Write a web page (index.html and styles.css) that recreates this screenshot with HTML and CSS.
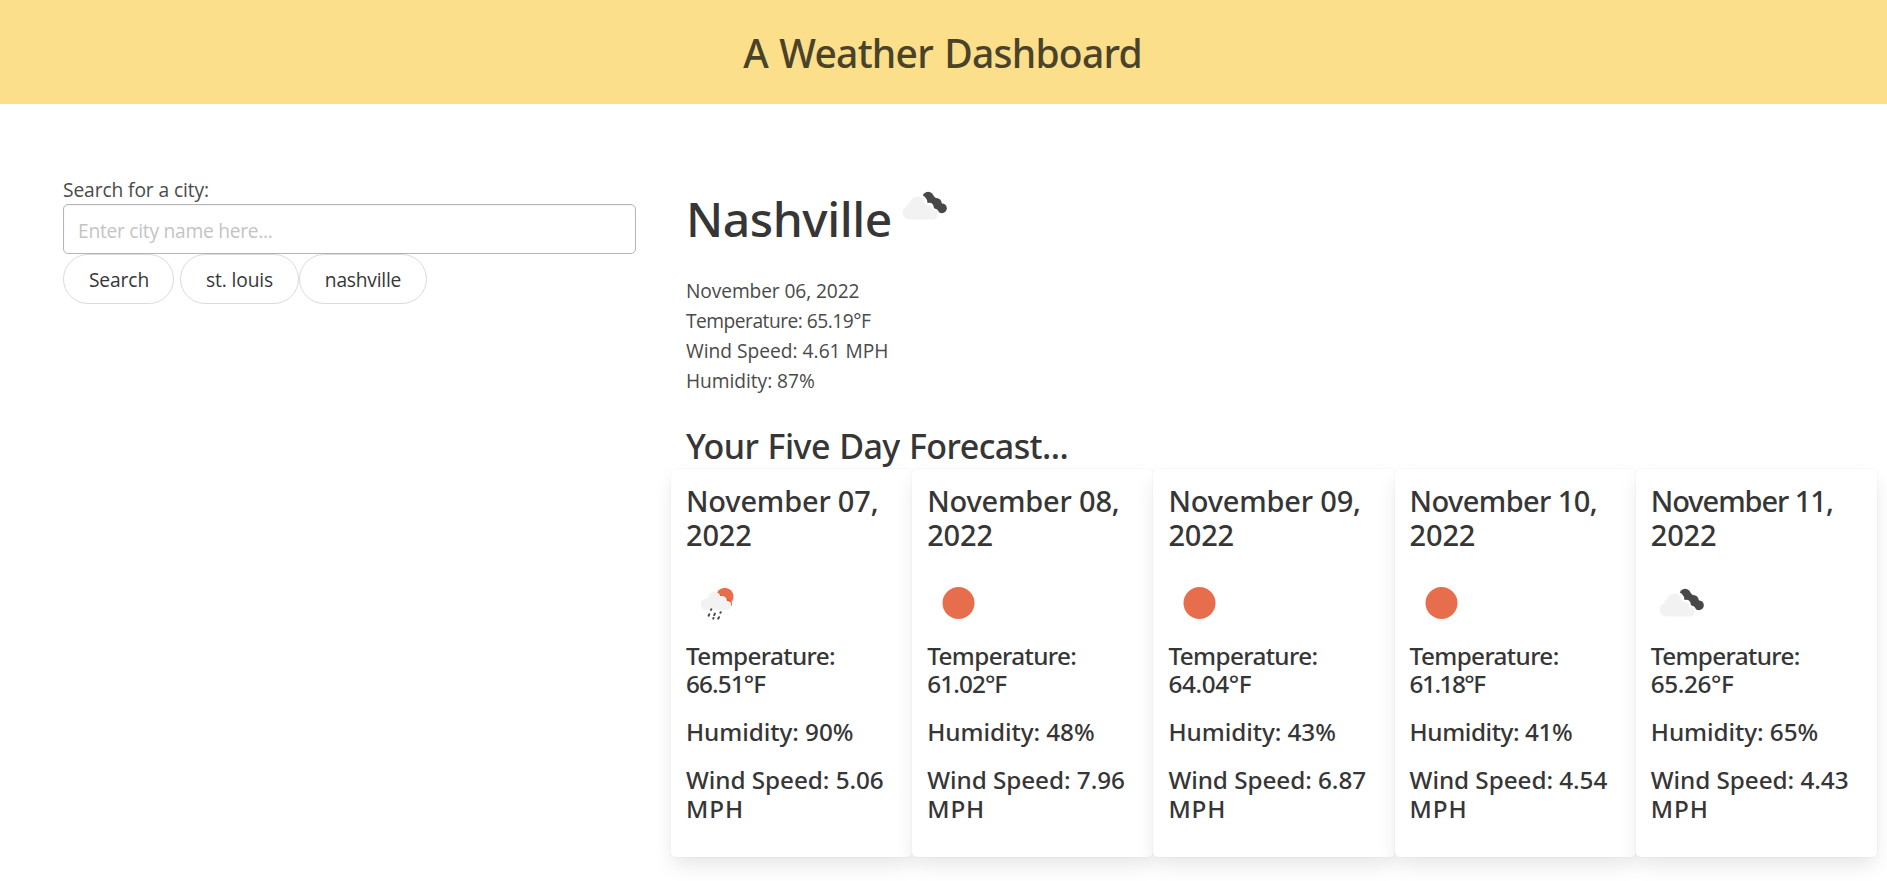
FILE: index.html
```
<!DOCTYPE html>
<html lang="en">
<head>
<meta charset="utf-8">
<title>A Weather Dashboard</title>
<link rel="stylesheet" href="styles.css">
</head>
<body>
<svg class="defs" aria-hidden="true">
  <symbol id="clouds" viewBox="0.500 -3 63 63">
    <g fill="#484848"><circle cx="34.600" cy="20.500" r="5.700"/><circle cx="42.800" cy="26.300" r="5.400"/><circle cx="48.400" cy="31.300" r="4.900"/><path d="M31 24l8-6 13 12-5 6z"/></g>
    <path fill="#fff" d="M17 26a8.500 8.500 0 0 1 17 0q6-1.500 6.500 5.500 5 0 5.500 7l-29 3z"/>
    <path fill="#f2f2f2" d="M15.500 42.500a7 7 0 0 1-1.500-13.600q0-3.400 2.500-2.900a7.300 7.300 0 0 1 14.300-.8q.8 1.800 1.800 2.800 6-.3 6.500 5.200 5-.5 5.600 3.300-.4 5.500-5.200 6z"/>
  </symbol>
  <symbol id="sun" viewBox="0 0 63 63">
    <circle cx="31.500" cy="32" r="16" fill="#e66e4c"/>
  </symbol>
  <symbol id="rain" viewBox="-1 -1 63 63">
    <circle cx="37.800" cy="24.500" r="8.700" fill="#e66e4c"/>
    <path fill="#e84e23" d="M31 22l3 1 4 2 4 3 3 3v3h-8z"/>
    <path fill="#f2f2f2" d="M19.500 38a5.600 5.600 0 0 1-.8-11.200q1.800-.3 2.500-1a6.300 6.300 0 0 1 12.200-1.700q6-.6 6.700 4.900 4 0 4.400 4-.3 4.400-4 5z"/>
    <path stroke="#484848" stroke-width="2" stroke-linecap="round" d="M24.300 37.300l-.3.600M22.300 42.300l-.7 1.400M27.900 41.600l-.7 1.400M33.700 40.200l-.3.600M26.500 46l-.3.600M32 45.200l-.8 1.400"/>
  </symbol>
</svg>
<header class="hero"><h1 class="hero-title">A Weather Dashboard</h1></header>
<main class="columns">
  <section class="search">
    <label class="label" for="city">Search for a city:</label>
    <input class="input" id="city" type="text" placeholder="Enter city name here...">
    <div class="buttons">
      <button class="button go">Search</button><button class="button louis">st. louis</button><button class="button nash">nashville</button>
    </div>
  </section>
  <section class="weather">
    <div class="current">
      <h2 class="city">Nashville</h2>
      <svg class="icon"><use href="#clouds"/></svg>
    </div>
    <div class="details">
      <p class="date">November 06, 2022</p>
      <p class="temp">Temperature: 65.19°F</p>
      <p class="wind">Wind Speed: 4.61 MPH</p>
      <p class="hum">Humidity: 87%</p>
    </div>
    <h2 class="forecast-title">Your Five Day Forecast...</h2>
    <div class="cards">
      <article class="card">
        <h3 class="day">November 07,<br>2022</h3>
        <svg class="icon"><use href="#rain"/></svg>
        <h4 class="stat"><span class="t">Temperature:</span><br><span class="v one">66.51°F</span></h4>
        <h4 class="stat">Humidity: 90%</h4>
        <h4 class="stat">Wind Speed: 5.06<br><span class="mph">MPH</span></h4>
      </article>
      <article class="card">
        <h3 class="day">November 08,<br>2022</h3>
        <svg class="icon"><use href="#sun"/></svg>
        <h4 class="stat"><span class="t">Temperature:</span><br><span class="v one">61.02°F</span></h4>
        <h4 class="stat">Humidity: 48%</h4>
        <h4 class="stat">Wind Speed: 7.96<br><span class="mph">MPH</span></h4>
      </article>
      <article class="card">
        <h3 class="day">November 09,<br>2022</h3>
        <svg class="icon"><use href="#sun"/></svg>
        <h4 class="stat"><span class="t">Temperature:</span><br><span class="v">64.04°F</span></h4>
        <h4 class="stat">Humidity: 43%</h4>
        <h4 class="stat">Wind Speed: 6.87<br><span class="mph">MPH</span></h4>
      </article>
      <article class="card">
        <h3 class="day"><span class="d10">November 10,</span><br>2022</h3>
        <svg class="icon"><use href="#sun"/></svg>
        <h4 class="stat"><span class="t">Temperature:</span><br><span class="v ones">61.18°F</span></h4>
        <h4 class="stat"><span class="tight">Humidity: 41%</span></h4>
        <h4 class="stat">Wind Speed: 4.54<br><span class="mph">MPH</span></h4>
      </article>
      <article class="card">
        <h3 class="day"><span class="d11">November 11,</span><br>2022</h3>
        <svg class="icon"><use href="#clouds"/></svg>
        <h4 class="stat"><span class="t">Temperature:</span><br><span class="v">65.26°F</span></h4>
        <h4 class="stat">Humidity: 65%</h4>
        <h4 class="stat">Wind Speed: 4.43<br><span class="mph">MPH</span></h4>
      </article>
    </div>
  </section>
</main>
</body>
</html>
```
FILE: styles.css
```
*{box-sizing:border-box;margin:0;padding:0}
html{overflow:hidden;background:#fff}
body{min-height:100vh;font:19.2px/30px "Open Sans","Noto Sans",sans-serif;color:#4a4a4a}
h1,h2,h3,h4{font-family:"Noto Sans",sans-serif;font-weight:500;color:#363636;white-space:nowrap}
.defs{display:none}
.hero{height:104px;background:#fcdf8a;display:flex;justify-content:center;padding:30px 2px 0 0}
.hero-title{font-size:39px;line-height:45px;letter-spacing:-.76px;word-spacing:2px;color:#4a4229}
.columns{display:flex;padding:70px 10px 24px 63px}
.search{width:573px;padding-top:1px}
.label{display:block;line-height:29px;letter-spacing:-.1px}
.input{display:block;width:100%;height:50px;border:1px solid #b5b5b5;border-radius:5px;padding:2px 14px 0;font:inherit;letter-spacing:-.26px;box-shadow:inset 0 1px 2px rgba(10,10,10,.05);background:#fff}
.input::placeholder{color:#c4c4c4;opacity:1}
.buttons{display:flex}
.button{height:50px;border:1px solid #dbdbdb;border-radius:25px;background:#fff;color:#363636;font:inherit;padding-top:1px}
.go{width:111px;margin-right:6px;padding-left:1px;letter-spacing:-.1px}
.louis{width:119px;letter-spacing:-.1px}
.nash{width:128px;letter-spacing:-.22px}
.weather{width:1206px;margin-left:35px}
.current{display:flex;padding-left:15px;height:102px}
.city{font-size:48px;line-height:56px;padding-top:17px;letter-spacing:-.44px}
.current .icon{margin-left:2px}
.icon{display:block;width:63px;height:63px}
.details{padding-left:15px;height:150px}
.date{letter-spacing:-.11px}
.temp{letter-spacing:-.5px}
.hum{letter-spacing:-.05px}
.forecast-title{font-size:34px;line-height:40px;height:43px;padding-left:15px;letter-spacing:-.57px;word-spacing:1px}
.cards{display:grid;grid-template-columns:repeat(5,1fr)}
.card{height:388px;padding:15px 15px 0;background:#fff;border-radius:5px;box-shadow:0 10px 20px -2px rgba(10,10,10,.1),0 0 0 1px rgba(10,10,10,.02)}
.day{font-size:29px;line-height:34px;letter-spacing:-.18px}
.d10{letter-spacing:-.6px}
.d11{letter-spacing:-1.05px}
.card .icon{margin:19px 0 8px}
.stat{font-size:24.3px;line-height:28.4px;letter-spacing:-.06px;margin-bottom:19.6px}
.t{letter-spacing:-.62px}
.v{letter-spacing:-.38px}
.one{letter-spacing:-.9px}
.ones{letter-spacing:-1.5px}
.tight{letter-spacing:-.42px}
.mph{letter-spacing:.9px}
```
